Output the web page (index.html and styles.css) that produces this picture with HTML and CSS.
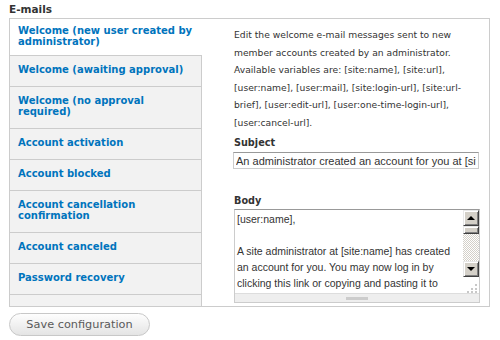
FILE: index.html
```html
<!DOCTYPE html>
<html>
<head>
<meta charset="utf-8">
<link rel="stylesheet" href="styles.css">
</head>
<body>
<div class="group">
  <div class="group-title">E-mails</div>
  <div class="vtabs">
    <ul class="tab-list">
      <li class="tab active"><a>Welcome (new user created by administrator)</a></li>
      <li class="tab"><a>Welcome (awaiting approval)</a></li>
      <li class="tab"><a>Welcome (no approval required)</a></li>
      <li class="tab"><a>Account activation</a></li>
      <li class="tab"><a>Account blocked</a></li>
      <li class="tab"><a>Account cancellation confirmation</a></li>
      <li class="tab"><a>Account canceled</a></li>
      <li class="tab"><a>Password recovery</a></li>
    </ul>
    <div class="pane">
      <div class="desc">Edit the welcome e-mail messages sent to new<br>member accounts created by an administrator.<br>Available variables are: [site:name], [site:url],<br>[user:name], [user:mail], [site:login-url], [site:url-<br>brief], [user:edit-url], [user:one-time-login-url],<br>[user:cancel-url].</div>
      <div class="field field-subject">
        <label class="label">Subject</label>
        <input class="text-input" type="text" value="An administrator created an account for you at [site:name]">
      </div>
      <div class="field field-body">
        <label class="label">Body</label>
        <div class="ta-wrap">
          <div class="ta">
            <div class="ta-text">[user:name],<br><br>A site administrator at [site:name] has created<br>an account for you. You may now log in by<br>clicking this link or copying and pasting it to</div>
            <div class="sb">
              <div class="sb-btn"><span class="arrow-up"></span></div>
              <div class="sb-thumb"></div>
              <div class="sb-track"></div>
              <div class="sb-btn"><span class="arrow-down"></span></div>
              <div class="sb-corner">
                <svg width="16" height="16" viewBox="0 0 16 16">
                  <rect x="12" y="7" width="2" height="2" fill="#c8c8c8"/>
                  <rect x="8" y="11" width="2" height="2" fill="#c8c8c8"/>
                  <rect x="12" y="11" width="2" height="2" fill="#c8c8c8"/>
                  <rect x="4" y="14" width="2" height="2" fill="#c8c8c8"/>
                  <rect x="8" y="14" width="2" height="2" fill="#c8c8c8"/>
                  <rect x="12" y="14" width="2" height="2" fill="#c8c8c8"/>
                </svg>
              </div>
            </div>
          </div>
          <div class="grippie"><span class="grip-bar"></span></div>
        </div>
      </div>
    </div>
  </div>
</div>
<div class="actions">
  <button class="save">Save configuration</button>
</div>
</body>
</html>
```

FILE: styles.css
```css
html, body {
  margin: 0;
  padding: 0;
  background: #fff;
}
body {
  font-family: "DejaVu Sans", Verdana, sans-serif;
  color: #333;
  width: 500px;
  height: 340px;
  overflow: hidden;
}
.group-title {
  font-weight: bold;
  font-size: 10.5px;
  line-height: 18px;
  padding-left: 9px;
  color: #333;
}
.vtabs {
  margin-left: 9px;
  width: 481px;
  box-sizing: border-box;
  border: 1px solid #ccc;
  display: flex;
}
.tab-list {
  list-style: none;
  margin: 0;
  padding: 0;
  width: 192px;
  flex: none;
  box-sizing: border-box;
  background: #f2f2f2;
  border-right: 1px solid #ccc;
}
.tab {
  border-bottom: 1px solid #ccc;
  padding: 8px 8px 11px 8px;
  font-size: 10px;
  line-height: 11px;
  font-weight: bold;
}
.tab a {
  color: #0074bd;
  text-decoration: none;
}
.tab.active {
  background: #fff;
  margin-right: -1px;
  padding: 6px 8px 8px 8px;
}
.pane {
  flex: 1;
  padding: 7px 10px 3px 32px;
  min-width: 0;
}
.desc {
  font-size: 9.2px;
  line-height: 17.5px;
  white-space: nowrap;
  color: #333;
}
.field-subject {
  margin-top: 5px;
}
.field-body {
  margin-top: 25px;
}
.label {
  display: block;
  font-weight: bold;
  font-size: 9.7px;
  line-height: 14px;
  color: #333;
}
.field-subject .label {
  margin-bottom: 2px;
}
.field-body .label {
  margin-bottom: 1px;
}
.text-input {
  display: block;
  box-sizing: border-box;
  width: 246px;
  height: 17px;
  margin: 0 0 0 -1px;
  padding: 0 2px;
  border: 1px solid #ccc;
  border-top-color: #999;
  font-family: "Liberation Sans", Arial, sans-serif;
  font-size: 11px;
  color: #333;
  background: #fff;
  outline: none;
}
.ta-wrap {
  width: 246px;
  box-sizing: border-box;
  border: 1px solid #ccc;
  border-top-color: #999;
}
.ta {
  display: flex;
  height: 83px;
}
.ta-text {
  flex: 1;
  padding: 1px 0 0 2px;
  font-family: "Liberation Sans", Arial, sans-serif;
  font-size: 10.5px;
  line-height: 16px;
  color: #333;
  white-space: nowrap;
  overflow: hidden;
}
.sb {
  width: 16px;
  flex: none;
  display: flex;
  flex-direction: column;
}
.sb-btn, .sb-thumb {
  box-sizing: border-box;
  background: #d4d0c8;
  border: 1px solid;
  border-color: #e8e8e8 #404040 #404040 #e8e8e8;
  box-shadow: inset 1px 1px 0 #fff, inset -1px -1px 0 #808080;
  display: flex;
  align-items: center;
  justify-content: center;
}
.sb-btn {
  height: 16px;
}
.sb-thumb {
  height: 8px;
}
.sb-track {
  flex: 1;
  background-color: #fff;
  background-image: repeating-conic-gradient(#d4d0c8 0 25%, #fff 0 50%);
  background-size: 2px 2px;
}
.sb-corner {
  height: 16px;
  background: #fff;
}
.sb-corner svg {
  display: block;
}
.arrow-up {
  width: 0;
  height: 0;
  border-left: 4px solid transparent;
  border-right: 4px solid transparent;
  border-bottom: 4px solid #000;
}
.arrow-down {
  width: 0;
  height: 0;
  border-left: 4px solid transparent;
  border-right: 4px solid transparent;
  border-top: 4px solid #000;
}
.grippie {
  height: 8px;
  background: #eee;
  border-top: 1px solid #ddd;
  display: flex;
  align-items: center;
  justify-content: center;
}
.grip-bar {
  width: 22px;
  height: 3px;
  background: #ccc;
}
.actions {
  padding: 6px 0 0 9px;
}
.save {
  display: block;
  box-sizing: border-box;
  width: 141px;
  height: 23px;
  margin: 0;
  padding: 0;
  border: 1px solid #c8c8c8;
  border-radius: 12px;
  background: linear-gradient(#fefefe, #e4e4e4);
  font-family: "DejaVu Sans", Verdana, sans-serif;
  font-size: 11.3px;
  color: #5a5a5a;
}
```
